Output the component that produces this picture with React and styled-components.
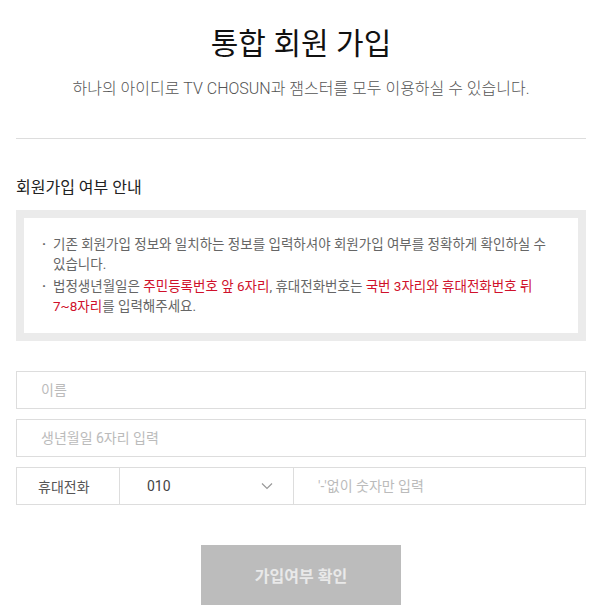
import React from "react";
import styled, { createGlobalStyle } from "styled-components";

const Global = createGlobalStyle`
  html, body { margin: 0; padding: 0; background: #fff; }
  body { font-family: Roboto, "Noto Sans CJK KR", sans-serif; color: #222; }
  * { box-sizing: border-box; }
`;

const Page = styled.div`
  width: 604px;
  padding: 24px 18px 0 16px;
`;

const Title = styled.h1`
  margin: 0;
  text-align: center;
  font-size: 30px;
  font-weight: 400;
  line-height: 40px;
  color: #111;
`;

const Subtitle = styled.p`
  margin: 15px 0 0;
  text-align: center;
  font-size: 16px;
  line-height: 20px;
  color: #555;
  font-weight: 300;
`;

const Divider = styled.hr`
  margin: 39px 0 0;
  border: 0;
  border-top: 1px solid #ddd;
`;

const SectionTitle = styled.h2`
  margin: 38px 0 0;
  font-size: 16px;
  font-weight: 400;
  line-height: 22px;
  color: #222;
`;

const NoticeBox = styled.div`
  margin-top: 11px;
  border: 8px solid #ebebeb;
  padding: 16px 30px 17px 18px;
`;

const NoticeList = styled.ul`
  margin: 0;
  padding: 0;
  list-style: none;
  display: flex;
  flex-direction: column;
  gap: 2px;
`;

const NoticeItem = styled.li`
  position: relative;
  padding-left: 11px;
  font-size: 13.5px;
  line-height: 20px;
  color: #666;
  &::before {
    content: "·";
    position: absolute;
    left: 0;
    top: 0;
    font-weight: 700;
  }
`;

const Red = styled.span`
  color: #d0112b;
`;

const Form = styled.div`
  margin-top: 30px;
  display: flex;
  flex-direction: column;
  gap: 10px;
`;

const TextInput = styled.input`
  width: 100%;
  height: 38px;
  border: 1px solid #ddd;
  padding: 0 24px;
  font-size: 14px;
  font-family: inherit;
  color: #333;
  outline: none;
  &::placeholder { color: #bbb; }
`;

const PhoneRow = styled.div`
  display: flex;
  height: 38px;
  border: 1px solid #ddd;
`;

const PhoneLabel = styled.div`
  width: 103px;
  flex: none;
  display: flex;
  align-items: center;
  padding-left: 21px;
  font-size: 14px;
  color: #555;
  border-right: 1px solid #ddd;
`;

const SelectBox = styled.div`
  width: 174px;
  flex: none;
  display: flex;
  align-items: center;
  justify-content: space-between;
  padding: 0 20px 0 27px;
  font-size: 14px;
  color: #444;
  border-right: 1px solid #ddd;
`;

const PhoneInput = styled.input`
  flex: 1;
  min-width: 0;
  border: 0;
  padding: 0 24px;
  font-size: 14px;
  font-family: inherit;
  outline: none;
  &::placeholder { color: #bbb; }
`;

const ButtonRow = styled.div`
  display: flex;
  justify-content: center;
  margin-top: 40px;
`;

const SubmitButton = styled.button`
  width: 200px;
  height: 60px;
  border: 0;
  background: #bcbcbc;
  color: #e9e9e9;
  font-family: inherit;
  font-size: 16px;
  font-weight: 700;
`;

const Chevron = () => (
  <svg width="12" height="8" viewBox="0 0 12 8" fill="none">
    <path d="M1 1.5l5 5 5-5" stroke="#999" strokeWidth="1.2" />
  </svg>
);

export default function App() {
  return (
    <>
      <Global />
      <Page>
        <Title>통합 회원 가입</Title>
        <Subtitle>하나의 아이디로 TV CHOSUN과 잼스터를 모두 이용하실 수 있습니다.</Subtitle>
        <Divider />
        <SectionTitle>회원가입 여부 안내</SectionTitle>
        <NoticeBox>
          <NoticeList>
            <NoticeItem>
              기존 회원가입 정보와 일치하는 정보를 입력하셔야 회원가입 여부를 정확하게 확인하실 수 있습니다.
            </NoticeItem>
            <NoticeItem>
              법정생년월일은 <Red>주민등록번호 앞 6자리</Red>, 휴대전화번호는 <Red>국번 3자리와 휴대전화번호 뒤 7~8자리</Red>를 입력해주세요.
            </NoticeItem>
          </NoticeList>
        </NoticeBox>
        <Form>
          <TextInput placeholder="이름" />
          <TextInput placeholder="생년월일 6자리 입력" />
          <PhoneRow>
            <PhoneLabel>휴대전화</PhoneLabel>
            <SelectBox>
              <span>010</span>
              <Chevron />
            </SelectBox>
            <PhoneInput placeholder="'-'없이 숫자만 입력" />
          </PhoneRow>
        </Form>
        <ButtonRow>
          <SubmitButton>가입여부 확인</SubmitButton>
        </ButtonRow>
      </Page>
    </>
  );
}
